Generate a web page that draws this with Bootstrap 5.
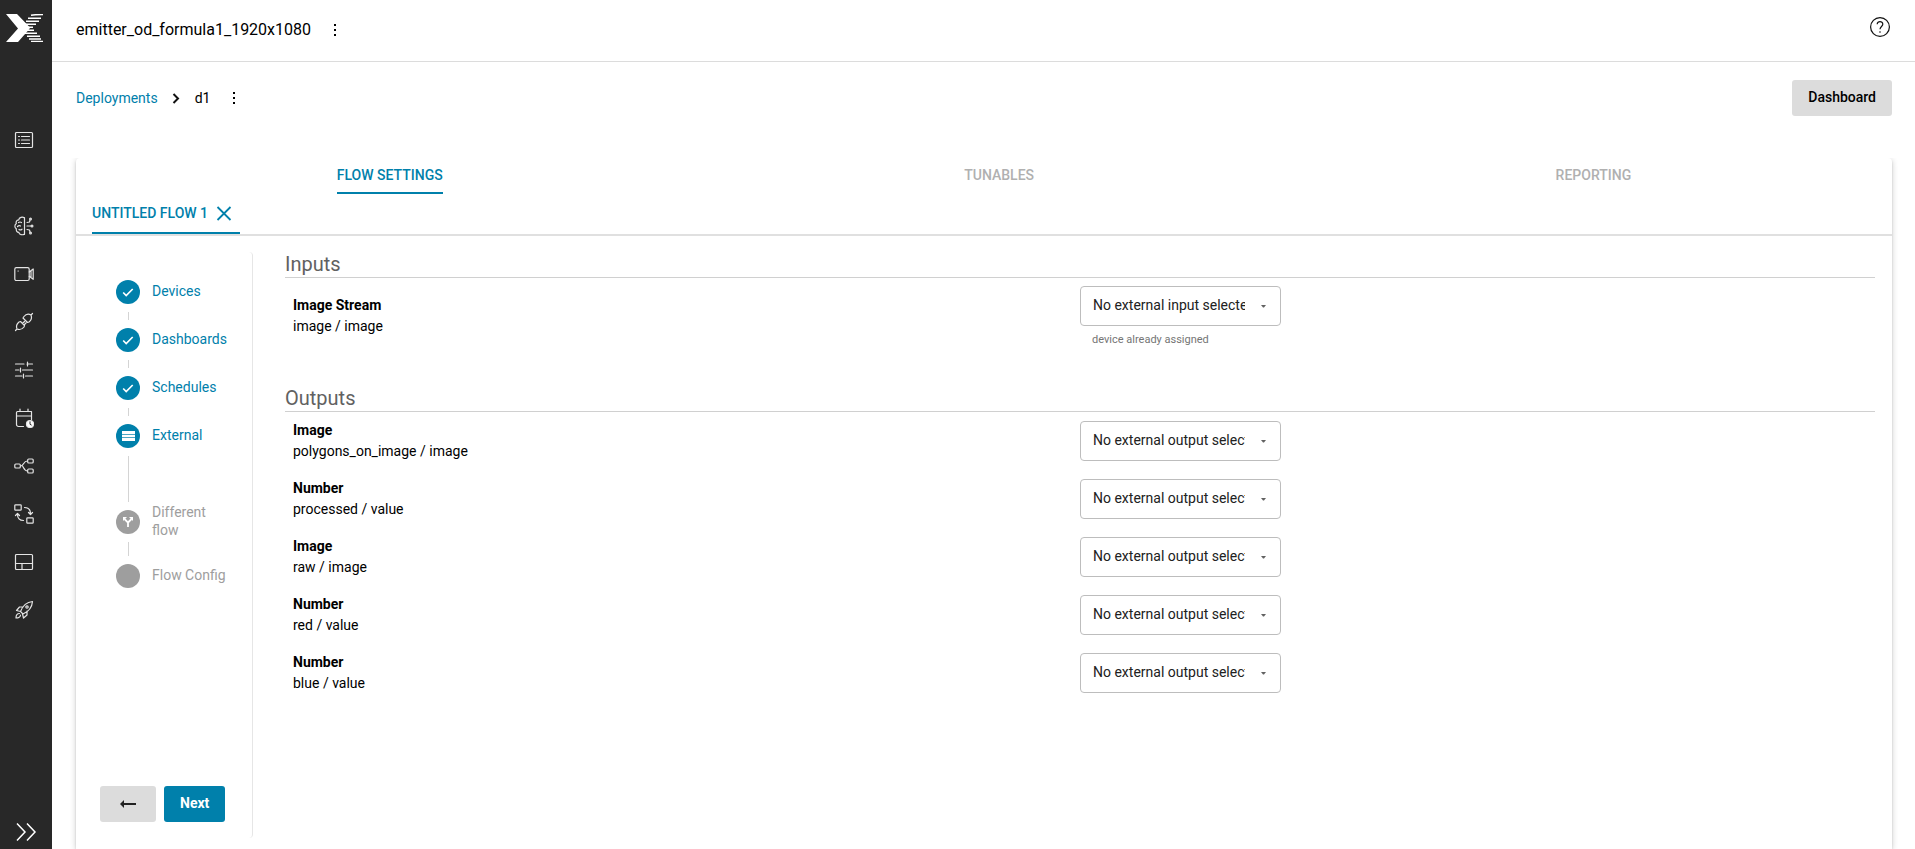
<!DOCTYPE html>
<html lang="en">
<head>
<meta charset="utf-8">
<meta name="viewport" content="width=device-width, initial-scale=1">
<title>emitter_od_formula1_1920x1080</title>
<link href="https://cdn.jsdelivr.net/npm/bootstrap@5.3.0/dist/css/bootstrap.min.css" rel="stylesheet">
<style>
:root { --accent: #0080ab; --line: #dcdcdc; }
body { font-family: Roboto, "Liberation Sans", sans-serif; font-size: 14px; line-height: 20px; color: #000; }
svg { display: block; }
.side-nav { width: 52px; background: #282828; }
.side-nav a { width: 48px; height: 48px; color: #fff; }
.side-nav .brand-link { height: 56px; padding-left: 6px; }
.side-nav .first-link { margin-top: 60px; margin-bottom: 38px; }
.side-nav .line-icon { fill: none; stroke: #e4e4e4; stroke-width: 1.2; stroke-linejoin: round; stroke-linecap: round; }
.side-nav .expand-btn { height: 34px; color: #fff; padding-left: 14px; }
.top-bar { height: 62px; border-bottom: 1px solid var(--line); padding: 0 23px 2px 24px; }
.page-title { font-size: 16px; line-height: 24px; font-weight: 400; }
.help-btn { padding-bottom: 6px; }
.page-body { padding: 18px 23px 0 24px; }
.accent-link, .accent-link:hover { color: var(--accent); }
.btn-flat { height: 36px; padding: 0 16px; border: 0; border-radius: 3px; font-size: 14px; font-weight: 500; line-height: 34px; }
.btn-flat.btn-grey, .btn-flat.btn-accent { padding-bottom: 2px; }
.btn-grey, .btn-grey:hover { background: var(--line); color: #000; }
.btn-accent, .btn-accent:hover { background: var(--accent); color: #fff; font-weight: 700; }
.flow-card { margin-top: 42px; border-radius: 4px 4px 0 0; box-shadow: 0 2px 2px rgba(0,0,0,.14), 0 3px 1px -2px rgba(0,0,0,.2), 0 1px 6px rgba(0,0,0,.2); clip-path: inset(0 -10px 0 -10px); }
.main-tab { padding: 0; border: 0; border-bottom: 2px solid transparent; background: none; color: #b0b0b0; font-weight: 500; line-height: 34px; }
.main-tab.active, .flow-tab { color: var(--accent); border-bottom: 2px solid var(--accent); }
.flow-row { border-bottom: 2px solid #e0e0e0; padding-left: 16px; }
.flow-tab { height: 40px; font-weight: 500; padding-right: 6px; }
.steps { width: 177px; margin: 16px 0 11px; padding: 28px 20px 16px 24px; border-right: 1px solid #e6e6e6; border-radius: 4px; }
.step-list { padding-left: 16px; }
.step-item { height: 24px; gap: 12px; color: var(--accent); line-height: 18px; text-decoration: none; }
.step-text { padding-bottom: 2px; }
.step-dot { width: 24px; height: 24px; border-radius: 50%; background: var(--accent); flex: none; }
.step-item.idle { color: #9e9e9e; }
.step-item.idle .step-dot { background: #9e9e9e; }
.step-join { width: 1px; height: 8px; margin: 8px 0 8px 12px; background: #d4d4d4; }
.step-join.tall { height: 46px; }
.step-join.mid { height: 14px; }
.io-pane { padding: 16px 17px 0 32px; }
.io-title { font-size: 20px; line-height: 25px; font-weight: 400; color: #616161; border-bottom: 1px solid #d0d0d0; margin: 0; }
.io-row { padding: 8px 0; }
.io-label { padding-left: 8px; line-height: 21px; }
.io-select { width: 201px; height: 40px; border: 1px solid #bdbdbd; border-radius: 4px; padding: 0 35px 2px 12px; font-size: 14px; line-height: 20px; color: #212121;
  text-overflow: clip; background: #fff url("data:image/svg+xml,%3Csvg xmlns='http://www.w3.org/2000/svg' width='5' height='3'%3E%3Cpath d='M0 0h5L3 2.500H2z' fill='%23616161'/%3E%3C/svg%3E") no-repeat right 14px center / 5px 3px; }
.io-hint { font-size: 11px; line-height: 13px; color: #757575; padding: 7px 0 0 12px; }
</style>
</head>
<body>
<div class="d-flex vh-100 overflow-hidden">
  <nav class="side-nav d-flex flex-column flex-shrink-0" aria-label="Main">
    <a href="#" class="brand-link d-flex align-items-center" aria-label="Home">
      <svg width="37" height="28" viewBox="0 0 37 28" fill="#fff"><path d="M0 0h11l12 12.500c1 1 1 2 0 3L12 28H0l12-13.500z"/><path d="M25 1.200Q28 .6 37 .6M22 4.200h13M20 7.200h13M18.500 10.200H30M18 13.200h9M18 16.200h10M19 19.200h12M21 22.200h13M23 25h12M25 27.400h12" stroke="#fff" stroke-width="1.500" fill="none"/></svg>
    </a>
    <a href="#" class="first-link d-flex align-items-center justify-content-center" aria-label="Projects">
      <svg class="line-icon" width="20" height="20" viewBox="0 0 20 20"><rect x="1.500" y="2.500" width="17" height="15" rx="1"/><path d="M4.500 6.500h1M7.500 6.500h8M4.500 10h1M7.500 10h8M4.500 13.500h1M7.500 13.500h8"/></svg>
    </a>
    <a href="#" class="d-flex align-items-center justify-content-center" aria-label="Models">
      <svg class="line-icon" width="20" height="20" viewBox="0 0 20 20"><path d="M10.500 1.500v17M10.500 2C8.500.5 5 1.200 4.800 3.800 2.300 4 1.700 6 2.300 7.500.3 9 .5 11.500 2.300 12.700 2 15 3 16.200 4.800 16.400 5.300 18.800 8.500 19.400 10.500 18M4.500 6.500Q6 5.500 7.500 6.500M3.500 10.500Q5 9 6.500 10M5 13.500Q6.500 14.500 8 13.200M13 10h4M13 6.500l2.500-.5.500-2M13 13.500l2.500.5.500 2"/><circle cx="18" cy="10" r=".9"/><circle cx="16.500" cy="3" r=".9"/><circle cx="16.500" cy="17" r=".9"/></svg>
    </a>
    <a href="#" class="d-flex align-items-center justify-content-center" aria-label="Cameras">
      <svg class="line-icon" width="20" height="20" viewBox="0 0 20 20"><rect x=".8" y="3.700" width="14.400" height="12.800" rx="1.500"/><path d="M15.200 8l4-3v10.300l-4-3M17 7v6.500M4 7h.3"/></svg>
    </a>
    <a href="#" class="d-flex align-items-center justify-content-center" aria-label="Connections">
      <svg class="line-icon" width="20" height="20" viewBox="0 0 20 20"><path d="M17 3l1.500-1.500M1.500 18.500L3 17M10 4.500c2-2.500 5-2.500 7-1.500 1 2.500.5 5-2 7l-1.500.5-4.500-4.500zM6.500 9.500L5 10c-2.500 2-3 4.500-2 7 2.500 1 5 .5 7-2l.5-1.500zM8.500 11.500l2-2M10 13l2-2"/></svg>
    </a>
    <a href="#" class="d-flex align-items-center justify-content-center" aria-label="Tunables">
      <svg class="line-icon" width="20" height="20" viewBox="0 0 20 20"><path d="M1.500 4H10M13 4h5.500M13.500 2v4M1.500 10H5M6.500 8v4M8.500 10h10M1.500 16H8M9.500 14v4M11.500 16h7"/></svg>
    </a>
    <a href="#" class="d-flex align-items-center justify-content-center" aria-label="Schedules">
      <svg class="line-icon" width="20" height="20" viewBox="0 0 20 20"><path d="M9.500 18.500h-5a2 2 0 0 1-2-2v-12a1 1 0 0 1 1-1h14v8M2.500 8h15M6 1v2.500M14 1v2.500"/><circle cx="16" cy="16" r="3.500" fill="#fff"/><path d="M16 13.800v2.500l1.300.7" stroke="#282828" stroke-width="1"/></svg>
    </a>
    <a href="#" class="d-flex align-items-center justify-content-center" aria-label="Flows">
      <svg class="line-icon" width="20" height="20" viewBox="0 0 20 20"><rect x=".8" y="8" width="5.500" height="4" rx="1"/><rect x="13.700" y="3" width="5.500" height="4" rx="1"/><rect x="13.700" y="13" width="5.500" height="4" rx="1"/><path d="M6.500 10C10 10 9 5 13.500 5M8.500 10c1.500 2 1.500 5 5 5"/></svg>
    </a>
    <a href="#" class="d-flex align-items-center justify-content-center" aria-label="Transforms">
      <svg class="line-icon" width="20" height="20" viewBox="0 0 20 20"><rect x=".8" y=".8" width="6.400" height="5.400" rx=".8"/><rect x="12.800" y="13.800" width="6.400" height="5.400" rx=".8"/><path d="M10.500 3.500c4 0 6 2.500 6 6.500M14.500 8.500l2 2 2-2M9.500 16.500c-4 0-6-2.500-6-6M1.500 11.500l2-2 2 2"/></svg>
    </a>
    <a href="#" class="d-flex align-items-center justify-content-center" aria-label="Dashboards">
      <svg class="line-icon" width="20" height="20" viewBox="0 0 20 20"><rect x="1.500" y="2.500" width="17" height="15" rx="1"/><path d="M1.500 11.500h17M8 11.500v6"/></svg>
    </a>
    <a href="#" class="d-flex align-items-center justify-content-center" aria-label="Deployments">
      <svg class="line-icon" width="20" height="20" viewBox="0 0 20 20"><path d="M18.500 1.500C13 2 9 5 6.500 11.500l2.500 2.500C15 11.500 18 7.500 18.500 1.500zM9 7H5.500L2.500 10.500l4 1M13 11v4l-3.500 3-1-4M5.500 13.500C3 13.500 2 15.500 2 18c2.500 0 4.500-1 4.500-3"/><circle cx="13" cy="7" r="1.200"/></svg>
    </a>
    <button type="button" class="expand-btn btn border-0 rounded-0 py-0 pe-0 mt-auto text-start" aria-label="Expand menu">
      <svg width="24" height="20" viewBox="0 0 24 20" fill="none" stroke="#fff" stroke-width="1.500"><path d="M3 1.500l8 8.500-8 8.500M13 1.500l8 8.500-8 8.500"/></svg>
    </button>
  </nav>

  <div class="d-flex flex-column flex-grow-1">
    <header class="top-bar d-flex align-items-center flex-shrink-0">
      <h1 class="page-title mb-0">emitter_od_formula1_1920x1080</h1>
      <button type="button" class="btn p-0 border-0 ms-3" aria-label="Project menu">
        <svg width="16" height="16" viewBox="0 0 16 16"><path d="M7 2h2v2H7zM7 7h2v2H7zM7 12h2v2H7z"/></svg>
      </button>
      <button type="button" class="help-btn btn px-0 pt-0 border-0 ms-auto" aria-label="Help">
        <svg width="24" height="24" viewBox="0 0 24 24" fill="none" stroke="#111" stroke-width="1.200"><circle cx="12" cy="12" r="9.400"/><path d="M9.200 9.300c0-3.500 5.600-3.500 5.600 0 0 2-2.800 2.500-2.800 5M12 16.300v1.400"/></svg>
      </button>
    </header>

    <main class="page-body d-flex flex-column flex-grow-1">
      <div class="d-flex align-items-center">
        <a href="#" class="accent-link text-decoration-none">Deployments</a>
        <svg class="mx-2" width="21" height="20" viewBox="1 0 21 20" fill="none" stroke="#111" stroke-width="2"><path d="M8.500 6l4.500 4.500L8.500 15"/></svg>
        <span>d1</span>
        <button type="button" class="btn p-0 border-0 ms-3" aria-label="Deployment menu">
          <svg width="16" height="16" viewBox="0 0 16 16"><path d="M7 2h2v2H7zM7 7h2v2H7zM7 12h2v2H7z"/></svg>
        </button>
        <button type="button" class="btn btn-flat btn-grey ms-auto">Dashboard</button>
      </div>

      <section class="flow-card bg-white d-flex flex-column flex-grow-1">
        <div class="d-flex justify-content-around" role="tablist">
          <button type="button" class="main-tab active" role="tab" aria-selected="true">FLOW SETTINGS</button>
          <button type="button" class="main-tab" role="tab" aria-selected="false">TUNABLES</button>
          <button type="button" class="main-tab" role="tab" aria-selected="false">REPORTING</button>
        </div>
        <div class="flow-row d-flex">
          <div class="flow-tab d-flex align-items-center gap-2">
            <span>UNTITLED FLOW 1</span>
            <button type="button" class="btn p-0 border-0" aria-label="Close flow">
              <svg width="18" height="18" viewBox="0 0 18 18" fill="none" stroke="#0080ab" stroke-width="1.800"><path d="M1.500 3l13 13M14.500 3l-13 13"/></svg>
            </button>
          </div>
        </div>

        <div class="d-flex flex-grow-1">
          <aside class="steps d-flex flex-column flex-shrink-0">
            <div class="step-list">
              <a href="#" class="step-item d-flex align-items-center"><span class="step-dot"><svg width="24" height="24" viewBox="0 0 24 24" fill="none" stroke="#fff" stroke-width="1.700"><path d="M7.200 12.500l3 3 6.500-6.500"/></svg></span><span class="step-text">Devices</span></a>
              <div class="step-join"></div>
              <a href="#" class="step-item d-flex align-items-center"><span class="step-dot"><svg width="24" height="24" viewBox="0 0 24 24" fill="none" stroke="#fff" stroke-width="1.700"><path d="M7.200 12.500l3 3 6.500-6.500"/></svg></span><span class="step-text">Dashboards</span></a>
              <div class="step-join"></div>
              <a href="#" class="step-item d-flex align-items-center"><span class="step-dot"><svg width="24" height="24" viewBox="0 0 24 24" fill="none" stroke="#fff" stroke-width="1.700"><path d="M7.200 12.500l3 3 6.500-6.500"/></svg></span><span class="step-text">Schedules</span></a>
              <div class="step-join"></div>
              <a href="#" class="step-item d-flex align-items-center" aria-current="step"><span class="step-dot"><svg width="24" height="24" viewBox="0 0 24 24"><path d="M6 7h13v10H6z" fill="#fff"/><path d="M6 10.500h13M6 13.500h13" stroke="#0080ab" stroke-width=".7"/></svg></span><span class="step-text">External</span></a>
              <div class="step-join tall"></div>
              <a href="#" class="step-item idle d-flex align-items-center"><span class="step-dot"><svg width="24" height="24" viewBox="0 0 24 24" fill="none" stroke="#fff" stroke-width="1.800"><path d="M12 17v-4.500L8.500 9M12 12.500L15.500 9"/><path d="M7 7h4l-4 4zM17 7h-4l4 4z" fill="#fff" stroke="none"/></svg></span><span class="step-text">Different flow</span></a>
              <div class="step-join mid"></div>
              <a href="#" class="step-item idle d-flex align-items-center"><span class="step-dot"></span><span class="step-text text-nowrap">Flow Config</span></a>
            </div>
            <div class="d-flex gap-2 mt-auto">
              <button type="button" class="btn btn-flat btn-grey d-flex align-items-center" aria-label="Back">
                <svg width="24" height="24" viewBox="0 0 24 24" fill="none" stroke="#212121" stroke-width="2"><path d="M5 13h15"/><path d="M4 13l4-4v8z" fill="#212121" stroke="none"/></svg>
              </button>
              <button type="button" class="btn btn-flat btn-accent">Next</button>
            </div>
          </aside>

          <div class="io-pane flex-grow-1">
            <section class="mb-4 pb-2">
              <h2 class="io-title">Inputs</h2>
              <div class="io-row row g-0 align-items-center">
                <label class="io-label col-6" for="in1"><strong>Image Stream</strong><br>image / image</label>
                <div class="col-6">
                  <select id="in1" class="io-select form-select"><option>No external input selected</option></select>
                  <div class="io-hint">device already assigned</div>
                </div>
              </div>
            </section>
            <section>
              <h2 class="io-title">Outputs</h2>
              <div class="io-row row g-0 align-items-center">
                <label class="io-label col-6" for="out1"><strong>Image</strong><br>polygons_on_image / image</label>
                <div class="col-6"><select id="out1" class="io-select form-select"><option>No external output selected</option></select></div>
              </div>
              <div class="io-row row g-0 align-items-center">
                <label class="io-label col-6" for="out2"><strong>Number</strong><br>processed / value</label>
                <div class="col-6"><select id="out2" class="io-select form-select"><option>No external output selected</option></select></div>
              </div>
              <div class="io-row row g-0 align-items-center">
                <label class="io-label col-6" for="out3"><strong>Image</strong><br>raw / image</label>
                <div class="col-6"><select id="out3" class="io-select form-select"><option>No external output selected</option></select></div>
              </div>
              <div class="io-row row g-0 align-items-center">
                <label class="io-label col-6" for="out4"><strong>Number</strong><br>red / value</label>
                <div class="col-6"><select id="out4" class="io-select form-select"><option>No external output selected</option></select></div>
              </div>
              <div class="io-row row g-0 align-items-center">
                <label class="io-label col-6" for="out5"><strong>Number</strong><br>blue / value</label>
                <div class="col-6"><select id="out5" class="io-select form-select"><option>No external output selected</option></select></div>
              </div>
            </section>
          </div>
        </div>
      </section>
    </main>
  </div>
</div>
<script src="https://cdn.jsdelivr.net/npm/bootstrap@5.3.0/dist/js/bootstrap.bundle.min.js"></script>
</body>
</html>
